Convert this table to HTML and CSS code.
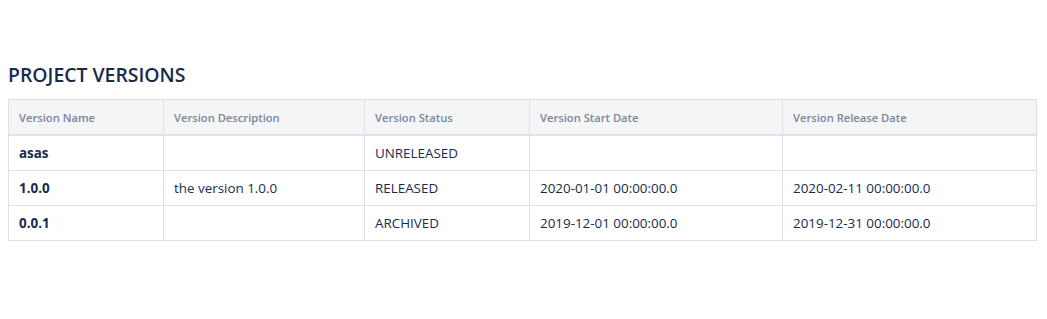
FILE: index.html
```html
<!DOCTYPE html>
<html>
<head>
<meta charset="utf-8">
<link rel="stylesheet" href="styles.css">
</head>
<body>
<section class="versions">
  <h2 class="title">PROJECT VERSIONS</h2>
  <table class="grid">
    <colgroup>
      <col class="c1"><col class="c2"><col class="c3"><col class="c4"><col class="c5">
    </colgroup>
    <thead>
      <tr>
        <th>Version Name</th>
        <th>Version Description</th>
        <th>Version Status</th>
        <th>Version Start Date</th>
        <th>Version Release Date</th>
      </tr>
    </thead>
    <tbody>
      <tr>
        <td class="name">asas</td>
        <td></td>
        <td>UNRELEASED</td>
        <td></td>
        <td></td>
      </tr>
      <tr>
        <td class="name">1.0.0</td>
        <td>the version 1.0.0</td>
        <td>RELEASED</td>
        <td>2020-01-01 00:00:00.0</td>
        <td>2020-02-11 00:00:00.0</td>
      </tr>
      <tr>
        <td class="name">0.0.1</td>
        <td></td>
        <td>ARCHIVED</td>
        <td>2019-12-01 00:00:00.0</td>
        <td>2019-12-31 00:00:00.0</td>
      </tr>
    </tbody>
  </table>
</section>
</body>
</html>
```
FILE: styles.css
```css
html, body {
  margin: 0;
  padding: 0;
  background: #ffffff;
}
body {
  padding: 8px;
  font-family: "Open Sans", "Noto Sans", sans-serif;
  color: #172b4d;
}
.versions {
  padding-top: 55px;
}
.title {
  margin: 0 0 12px 0;
  font-size: 19.4px;
  font-weight: 600;
  line-height: 24px;
  color: #172b4d;
}
.grid {
  width: 1028px;
  border-collapse: collapse;
  table-layout: fixed;
}
.c1 { width: 155px; }
.c2 { width: 201px; }
.c3 { width: 165px; }
.c4 { width: 253px; }
.c5 { width: 254px; }
.grid th, .grid td {
  border: 1px solid #dfe1e6;
  padding: 0 10px;
  text-align: left;
  white-space: nowrap;
}
.grid th {
  background: #f4f5f7;
  color: #7a869a;
  font-size: 11.2px;
  font-weight: 600;
  height: 34px;
  border-bottom: 2px solid #dfe1e6;
}
.grid td {
  font-size: 13.4px;
  font-weight: 400;
  height: 34px;
  color: #172b4d;
}
.grid td.name {
  font-weight: 700;
}
```
